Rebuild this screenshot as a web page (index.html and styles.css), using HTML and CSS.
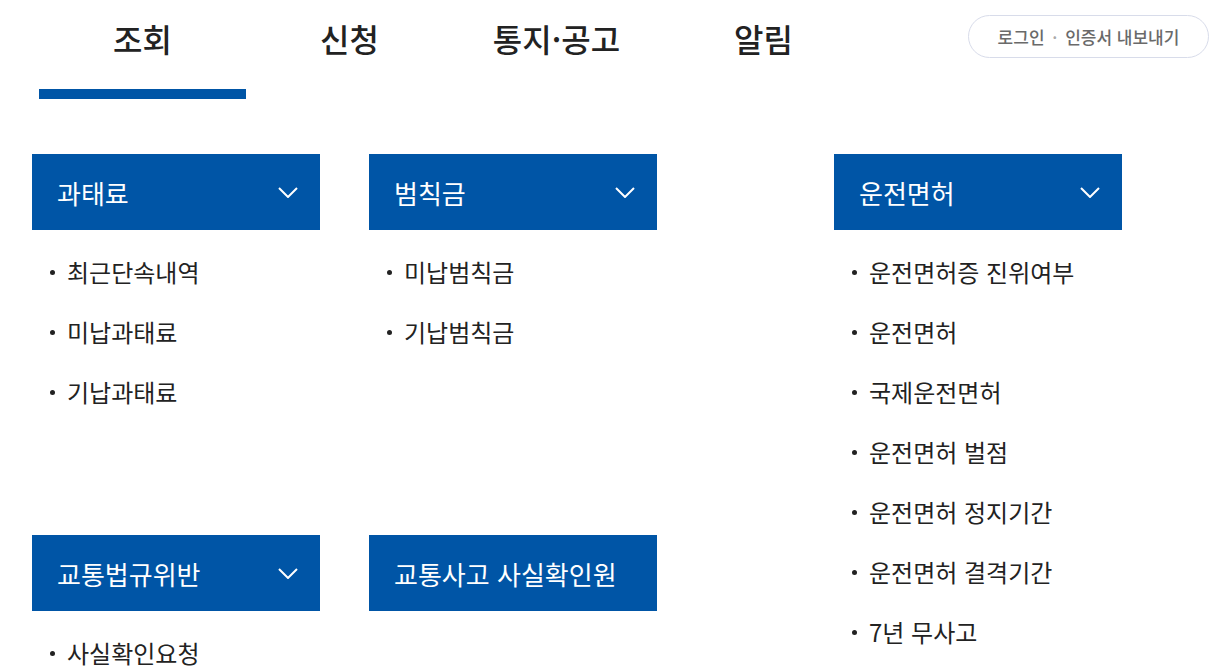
FILE: index.html
```html
<!DOCTYPE html>
<html lang="ko">
<head>
    <meta charset="UTF-8">
    <meta name="viewport" content="width=device-width, initial-scale=1.0">
    <title>조회</title>
    <link rel="stylesheet" href="styles.css">
</head>
<body>

    <header class="top">
        <nav class="tabs">
            <a class="tab active" href="#">조회</a>
            <a class="tab" href="#">신청</a>
            <a class="tab" href="#">통지·공고</a>
            <a class="tab" href="#">알림</a>
        </nav>
        <a class="login" href="#">로그인 <span class="dot">·</span> 인증서 내보내기</a>
    </header>

    <main class="menu">
        <section class="group">
            <h3 class="group-title">과태료
                <svg class="chev" width="20" height="11" viewBox="0 0 20 11"><path d="M1 1l9 9 9-9" fill="none" stroke="#fff" stroke-width="2"/></svg>
            </h3>
            <ul class="items">
                <li>최근단속내역</li>
                <li>미납과태료</li>
                <li>기납과태료</li>
            </ul>
        </section>

        <section class="group">
            <h3 class="group-title">범칙금
                <svg class="chev" width="20" height="11" viewBox="0 0 20 11"><path d="M1 1l9 9 9-9" fill="none" stroke="#fff" stroke-width="2"/></svg>
            </h3>
            <ul class="items">
                <li>미납범칙금</li>
                <li>기납범칙금</li>
            </ul>
        </section>

        <section class="group tall">
            <h3 class="group-title">운전면허
                <svg class="chev" width="20" height="11" viewBox="0 0 20 11"><path d="M1 1l9 9 9-9" fill="none" stroke="#fff" stroke-width="2"/></svg>
            </h3>
            <ul class="items">
                <li>운전면허증 진위여부</li>
                <li>운전면허</li>
                <li>국제운전면허</li>
                <li>운전면허 벌점</li>
                <li>운전면허 정지기간</li>
                <li>운전면허 결격기간</li>
                <li>7년 무사고</li>
            </ul>
        </section>

        <section class="group">
            <h3 class="group-title">교통법규위반
                <svg class="chev" width="20" height="11" viewBox="0 0 20 11"><path d="M1 1l9 9 9-9" fill="none" stroke="#fff" stroke-width="2"/></svg>
            </h3>
            <ul class="items">
                <li>사실확인요청</li>
            </ul>
        </section>

        <section class="group">
            <h3 class="group-title">교통사고 사실확인원</h3>
        </section>
    </main>

</body>
</html>
```

FILE: styles.css
```css
body {
    margin: 0;
    font-family: "Noto Sans CJK KR", "Noto Sans", sans-serif;
    color: #222;
    background: #fff;
}
a {
    text-decoration: none;
    color: inherit;
}
.top {
    display: flex;
    align-items: flex-start;
    padding-left: 39px;
    padding-right: 10px;
}
.tabs {
    display: flex;
}
.tab {
    width: 207px;
    height: 99px;
    box-sizing: border-box;
    padding-top: 15px;
    border-bottom: 10px solid transparent;
    text-align: center;
    font-size: 32px;
    font-weight: 500;
    line-height: 46px;
    color: #222;
}
.tab.active {
    border-bottom-color: #0055a6;
}
.login {
    margin-left: auto;
    margin-top: 15px;
    width: 241px;
    height: 43px;
    box-sizing: border-box;
    border: 1px solid #d8dcea;
    border-radius: 22px;
    text-align: center;
    font-size: 17px;
    font-weight: 500;
    line-height: 41px;
    color: #6a6a6a;
}
.login .dot {
    color: #aaa;
    margin: 0 3px;
}
.menu {
    display: grid;
    grid-template-columns: 337px 465px 288px;
    row-gap: 113px;
    align-items: start;
    padding-left: 32px;
    margin-top: 55px;
}
.group {
    width: 288px;
}
.group.tall {
    grid-column: 3;
    grid-row: 1 / 3;
}
.group-title {
    display: flex;
    align-items: center;
    justify-content: space-between;
    height: 76px;
    margin: 0;
    padding: 0 22px 0 25px;
    background: #0055a6;
    color: #fff;
    font-size: 26px;
    font-weight: 400;
}
.items {
    list-style: none;
    margin: 12px 0 0;
    padding: 0;
}
.items li {
    position: relative;
    padding-left: 35px;
    font-size: 24px;
    line-height: 60px;
    color: #222;
}
.items li::before {
    content: "";
    position: absolute;
    left: 18px;
    top: 28px;
    width: 5px;
    height: 5px;
    border-radius: 50%;
    background: #222;
}
```
